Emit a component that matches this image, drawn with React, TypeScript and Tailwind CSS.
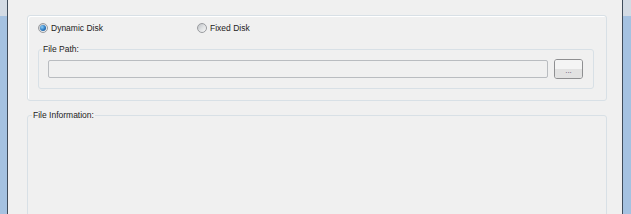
import React from 'react';

// Radio estilo Windows 7
function Radio({ checked, label }: { checked?: boolean; label: string }) {
  return (
    <div className="flex items-center gap-[3px]">
      <div className="flex h-[10px] w-[10px] items-center justify-center rounded-full border border-[#9a9ca0] bg-gradient-to-br from-[#bfc2c6] via-[#dfe1e3] to-[#f8f8f8]">
        {checked && (
          <div className="h-[6px] w-[6px] rounded-full bg-[radial-gradient(circle_at_35%_35%,#8fd0f8,#2a78c0_55%,#174f8a)]" />
        )}
      </div>
      <span>{label}</span>
    </div>
  );
}

function FrameSide({ right }: { right?: boolean }) {
  return (
    <div className={right ? 'flex w-[9px] shrink-0 flex-row' : 'flex w-[8px] shrink-0 flex-row'}>
      {right && <div className="w-px bg-[#3f4c5a]" />}
      <div className="flex flex-1 flex-col">
        <div className="h-[16px] bg-[#d3dbe4]" />
        <div className="flex-1 bg-[#a5c2e1]" />
      </div>
      {!right && <div className="w-px bg-[#3f4c5a]" />}
    </div>
  );
}

export default function App() {
  return (
    <div
      className="flex h-[214px] w-[631px] overflow-hidden bg-[#f0f0f0] text-[8.5px] leading-[10px] text-[#222]"
      style={{ fontFamily: '"Liberation Sans", Arial, sans-serif' }}
    >
      <FrameSide />

      <div className="flex min-w-0 flex-1 flex-col pl-[19px] pr-[15px] pt-[15px]">
        {/* Grupo superior */}
        <div className="flex h-[86px] shrink-0 flex-col rounded-[3px] border border-[#d8e0e6] pl-[10px] pr-[12px] shadow-[inset_1px_1px_0_#fff]">
          <div className="mt-[6px] flex h-[12px] items-center">
            <div className="w-[159px]">
              <Radio checked label="Dynamic Disk" />
            </div>
            <Radio label="Fixed Disk" />
          </div>

          <fieldset className="mt-[10px] h-[45px] shrink-0 rounded-[3px] border border-[#d8e0e6]">
            <legend className="ml-[3px] px-[1px] leading-[10px]">File Path:</legend>
            <div className="flex items-center gap-[6px] pl-[9px] pr-[10px] pt-[5px]">
              <div className="h-[18px] flex-1 rounded-[2px] border border-[#b9bcc0] bg-[#f0f0f0]" />
              <button className="flex h-[20px] w-[29px] flex-col overflow-hidden rounded-[3px] border border-[#8e8f91] text-[#5a4a6a]">
                <div className="h-1/2 w-full bg-[#f4f4f4]" />
                <div className="flex h-1/2 w-full items-start justify-center bg-[#e2e2e2] text-[8px] leading-[4px]">...</div>
              </button>
            </div>
          </fieldset>
        </div>

        {/* File Information */}
        <fieldset className="mt-[9px] h-[140px] shrink-0 rounded-[3px] border border-[#d8e0e6]">
          <legend className="ml-[4px] px-[1px] leading-[10px]">File Information:</legend>
        </fieldset>
      </div>

      <FrameSide right />
    </div>
  );
}
